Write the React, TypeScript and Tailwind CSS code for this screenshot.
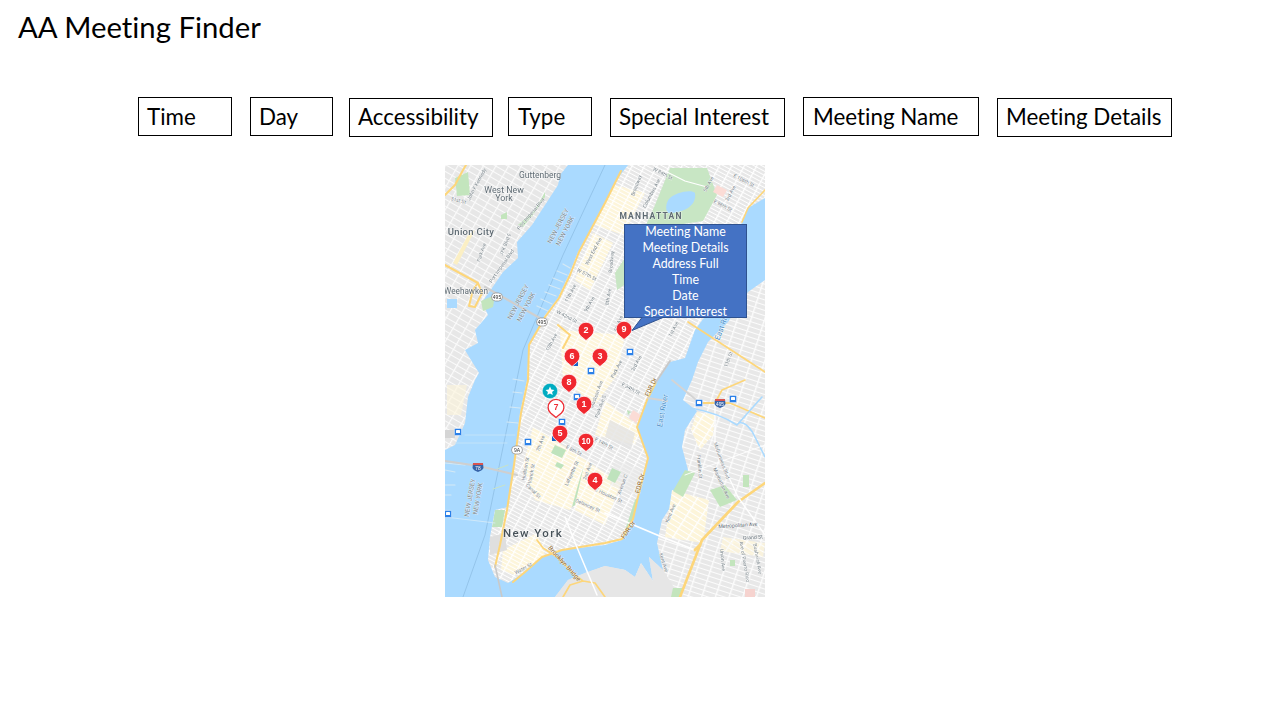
const font = { fontFamily: "Lato, 'Noto Sans', sans-serif" };

const filters: [string, string][] = [
  ["Time", "w-[94px] h-[39px] pl-2 pt-[2px]"],
  ["Day", "w-[83px] h-[39px] ml-[18px] pl-2 pt-[2px]"],
  ["Accessibility", "w-[144px] h-[39px] ml-[16px] mt-px pl-2"],
  ["Type", "w-[84px] h-[39px] ml-[15px] pl-[9px] pt-[2px]"],
  ["Special Interest", "w-[175px] h-[39px] ml-[18px] mt-px pl-2"],
  ["Meeting Name", "w-[176px] h-[39px] ml-[18px] pl-[9px] pt-[2px]"],
  ["Meeting Details", "w-[175px] h-[39px] ml-[18px] mt-px pl-2"],
];

const njLand =
  "M0 0H123L115 10L113 20L100 40L87 60L72 77L73 93L58 107L47 123L37 137L43 150L30 165L33 178L20 185L26 195L34 208L30 215L23 232L20 258L10 280L0 285Z";
const manhattan =
  "M183 0L170 17L160 37L147 63L133 87L125 107L113 133L100 150L84 180L82 215L75 248L67 315L63 342L50 345L45 372L43 395L50 412L63 418L80 407L97 392L117 385L160 380L177 375L188 355L193 332L203 293L192 262L202 235L213 215L225 197L240 193L250 165L283 120L297 57L303 43L320 33V0Z";
const brooklyn =
  "M320 115L303 127L283 157L263 177L253 197L247 215L238 235L252 246L240 265L237 282L243 305L232 332L217 355L212 378L218 405L204 392L208 416L196 398L190 412L180 405L160 401L140 408L123 415L110 432H320Z";

const pins: [string, number, number][] = [
  ["2", 141, 165],
  ["9", 179, 164],
  ["6", 127, 191],
  ["3", 155, 191],
  ["8", 124, 217],
  ["1", 139, 239],
  ["5", 115, 268],
  ["10", 141, 276],
  ["4", 150, 315],
];

const transit: [number, number][] = [
  [185, 187], [146, 206], [132, 232], [117, 257], [13, 267], [83, 277], [254, 238], [288, 234], [3, 349],
];

const c1 = "#5f6b73";
const c2 = "#7c878d";
const c3 = "#8a5f22";
const labels: [string, number, number, number, number, string][] = [
  ["NEW JERSEY", 115, 62, 6.5, -62, c2],
  ["NEW YORK", 122, 67, 6.5, -62, c2],
  ["NEW JERSEY", 75, 138, 6.5, -62, c2],
  ["NEW YORK", 83, 143, 6.5, -62, c2],
  ["NEW JERSEY", 27, 333, 6.5, -80, c2],
  ["NEW YORK", 35, 334, 6.5, -80, c2],
  ["East River", 220, 246, 7.5, -80, "#4a8fc8"],
  ["East River", 280, 160, 7.5, -70, "#4a8fc8"],
  ["FDR Dr", 197, 319, 6.5, -75, c3],
  ["FDR Dr", 185, 366, 6.5, -55, c3],
  ["FDR Dr", 208, 223, 6.5, -65, c3],
  ["Brooklyn Bridge", 118, 400, 6.5, 48, c3],
  ["51st St", 13, 37, 5, 15, c2],
  ["John F Kennedy", 33, 20, 5, -62, c2],
  ["Park Ave", 38, 88, 5, -72, c2],
  ["JFK Blvd E", 62, 80, 5, -68, c2],
  ["Port Imperial Blvd", 87, 50, 5, -50, c2],
  ["Port Imperial Blvd", 58, 102, 5, -55, c2],
  ["West End Ave", 150, 87, 5, -62, c2],
  ["W 57th St", 141, 111, 5, 28, c2],
  ["W 42nd St", 121, 153, 5, 28, c2],
  ["11th Ave", 127, 129, 5, -62, c2],
  ["9th Ave", 146, 140, 5, -62, c2],
  ["8th Ave", 165, 132, 5, -80, c2],
  ["10th Ave", 108, 178, 5, -62, c2],
  ["7th Ave", 97, 279, 5, -70, c2],
  ["E 8th St", 128, 287, 5, 28, c2],
  ["E 14th St", 158, 280, 5, 28, c2],
  ["Hudson St", 82, 304, 5, -80, c2],
  ["Varick St", 88, 309, 5, -80, c2],
  ["Canal St", 87, 327, 5, 45, c2],
  ["Lafayette St", 128, 309, 5, -65, c2],
  ["2nd Ave", 144, 307, 5, -70, c2],
  ["Delancey St", 142, 342, 5, 24, c2],
  ["E Houston St", 163, 332, 5, 24, c2],
  ["Avenue C", 179, 320, 5, -70, c2],
  ["Water St", 79, 405, 5, -28, c2],
  ["Park Ave S", 157, 242, 5, -70, c2],
  ["Madison Ave", 153, 230, 5, -70, c2],
  ["E 34th St", 185, 225, 5, 28, c2],
  ["Kent Ave", 227, 349, 5, -68, c2],
  ["Kent Ave", 217, 398, 5, 72, c2],
  ["Franklin St", 253, 302, 5, 85, c2],
  ["McGuinness Blvd", 275, 296, 5, 70, c2],
  ["Manhattan Ave", 275, 319, 5, 65, c2],
  ["Metropolitan Ave", 293, 362, 5.2, -4, c1],
  ["Grand St", 308, 374, 5.2, -4, c1],
  ["Union Ave", 276, 395, 5, 85, c2],
  ["Ave of Puerto Rico", 298, 397, 5, 80, c2],
  ["Bushwick Ave", 311, 394, 5, 80, c2],
  ["E 96th St", 277, 42, 5, 28, c2],
  ["5th Ave", 265, 20, 5, -62, c2],
  ["3rd Ave", 287, 29, 5, -62, c2],
  ["E 106th St", 298, 17, 5, 28, c2],
  ["Columbus Ave", 208, 29, 5, -62, c2],
  ["Broadway", 193, 21, 5, -70, c2],
  ["W 84th St", 217, 10, 5, 28, c2],
  ["Broadway", 168, 97, 5, -85, c2],
  ["5th Ave", 175, 159, 5, -70, c2],
  ["1st Ave", 230, 165, 5, -62, c2],
  ["3rd Ave", 193, 199, 5, -62, c2],
  ["Park Ave", 173, 205, 5, -62, c2],
  ["11th St", 285, 195, 5, -70, c2],
];

const cream: string[] = [
  "M115 165L180 170L172 210L150 240L118 215Z",
  "M88 262L125 285L148 300L125 345L90 335L78 300Z",
  "M132 290L176 318L160 360L130 345Z",
  "M58 385L92 368L100 390L70 410L56 405Z",
  "M170 20L200 28L178 70L150 60Z",
  "M148 68L168 78L145 125L130 115Z",
  "M160 236L195 262L190 280L150 270Z",
];
const greens: string[] = [
  "M106 235L113 239L110 244L103 240Z",
  "M110 280L121 285L117 293L106 288Z",
  "M112 297L119 300L116 304L110 301Z",
  "M167 303L176 307L170 318L162 314Z",
  "M139 300L130 340L127 342L133 320Z",
  "M185 350L190 335L193 332L187 360L178 372Z",
  "M50 345L60 345L57 362L47 362Z",
  "M58 270L68 271L66 288L58 288Z",
  "M182 245L186 247L183 250Z",
];

function Pin({ n, x, y }: { n: string; x: number; y: number }) {
  return (
    <g transform={`translate(${x} ${y})`}>
      <path d="M0 10.5L-5.4 5.9A7.9 7.9 0 1 1 5.4 5.9Z" fill="#f0282f" stroke="#fff" strokeOpacity="0.75" strokeWidth="1" />
      <text
        y="3.1"
        textAnchor="middle"
        fontSize={n.length > 1 ? 8.2 : 9}
        fontWeight="700"
        fill="#fff"
        fontFamily="'Liberation Sans', sans-serif"
      >
        {n}
      </text>
    </g>
  );
}

function Road({ d, w = 2, c = "#fdd67a" }: { d: string; w?: number; c?: string }) {
  return <path d={d} stroke={c} strokeWidth={w} fill="none" strokeLinejoin="round" strokeLinecap="round" />;
}

function MapArt() {
  return (
    <svg viewBox="0 0 320 432" className="block w-[320px] h-[432px]">
      <defs>
        <pattern id="mGrid" width="3.6" height="11" patternUnits="userSpaceOnUse" patternTransform="rotate(-62)">
          <rect width="3.6" height="11" fill="#e7e7e7" />
          <rect width="3.6" height="1.3" fill="#ffffff" />
          <rect width="1" height="11" fill="#ffffff" />
        </pattern>
        <pattern id="mCream" width="3.6" height="11" patternUnits="userSpaceOnUse" patternTransform="rotate(-62)">
          <rect width="3.6" height="11" fill="#fdf5da" />
          <rect width="3.6" height="1.3" fill="#ffffff" />
          <rect width="1" height="11" fill="#ffffff" />
        </pattern>
        <pattern id="nj" width="6" height="11" patternUnits="userSpaceOnUse" patternTransform="rotate(-60)">
          <rect width="6" height="11" fill="#e7e7e7" />
          <rect width="6" height="1.2" fill="#fbfbfb" />
          <rect width="1" height="11" fill="#fbfbfb" />
        </pattern>
        <pattern id="bk" width="5" height="13" patternUnits="userSpaceOnUse" patternTransform="rotate(-72)">
          <rect width="5" height="13" fill="#e8e8e8" />
          <rect width="5" height="1.4" fill="#fcfcfc" />
          <rect width="1" height="13" fill="#fcfcfc" />
        </pattern>
        <pattern id="bkCream" width="5" height="13" patternUnits="userSpaceOnUse" patternTransform="rotate(-58)">
          <rect width="5" height="13" fill="#fdf5da" />
          <rect width="5" height="1.4" fill="#ffffff" />
          <rect width="1" height="13" fill="#ffffff" />
        </pattern>
        <clipPath id="mclip">
          <path d={manhattan} />
        </clipPath>
      </defs>
      <g style={{ filter: "blur(0.5px)" }}>
        <rect width="320" height="432" fill="#aadaff" />
        <path d={njLand} fill="url(#nj)" />
        <path d={brooklyn} fill="url(#bk)" />
        <path d="M160 401L140 408L123 415L110 432H235L218 405L204 392L208 416L196 398L190 412L180 405Z" fill="#e6e6e6" />
        <path d={manhattan} fill="url(#mGrid)" />
        <g clipPath="url(#mclip)">
          {cream.map((d) => (
            <path key={d} d={d} fill="url(#mCream)" />
          ))}
          <path d="M165 255L190 268L186 285L160 272Z" fill="#e4e4e4" opacity="0.8" />
          <path d="M170 295L198 305L192 330L165 320Z" fill="#e9e9e9" opacity="0.55" />
          <path d="M45 372L60 368L62 385L45 390Z" fill="#dfdfdf" />
          <path d="M188 245L196 250L191 258L184 253Z" fill="#fbdcd6" />
          {greens.map((d) => (
            <path key={d} d={d} fill="#bfe3bd" />
          ))}
          <path d="M225 3L262 3L272 30L258 56L232 60L208 100L172 125L170 108L200 62L210 40Z" fill="#c8e6c4" />
          <path d="M224 34C230 27 247 24 250 28C252 40 240 48 223 48C220 44 221 38 224 34Z" fill="#aadaff" />
          <path d="M218 5L240 16L262 22" stroke="#fff" strokeWidth="1.2" fill="none" />
          <path d="M272 20L282 25L278 32L268 27Z" fill="#fbdcd6" />
        </g>
        <path d="M227 325L264 335L258 378L220 372Z" fill="url(#bkCream)" />
        <path d="M252 247L270 250L268 270L255 285L246 265Z" fill="url(#bkCream)" />
        <path d="M278 372L320 378L318 392L275 386Z" fill="url(#bkCream)" opacity="0.8" />
        <path d="M240 305L250 308L238 332L228 326Z" fill="#c3e5bd" />
        <path d="M265 325L280 320L292 335L275 342Z" fill="#c3e5bd" />
        <path d="M298 310L304 310L304 322L298 322Z" fill="#c3e5bd" />
        <path d="M228 423L238 423L236 432H226Z" fill="#c3e5bd" />
        <path d="M285 395L290 395L290 401L285 401Z" fill="#c3e5bd" />
        <path d="M300 424L310 424L310 432H300Z" fill="#f6d3cf" />
        <path d="M10 13L23 7L25 30L12 31Z" fill="#c3e5bd" />
        <path d="M73 60L90 45L100 27L100 32L88 50L78 62Z" fill="#c3e5bd" />
        <path d="M56 50L62 47L62 54L56 54Z" fill="#c3e5bd" />
        <path d="M36 136L50 130L48 142L38 146Z" fill="#c3e5bd" />
        <rect x="2" y="134" width="10" height="9" fill="#aadaff" />
        <path d="M30 65L23 70L8 98L12 100Z" fill="#fbefc4" />
        <path d="M2 220H22L16 250H2Z" fill="#fdf5da" opacity="0.6" />
        <path d="M0 265H10V273H0Z" fill="#d5d5d5" />
        <Road d="M160 0L118 90L78 185L40 370L18 432" w={0.6} c="#84b6dc" />
        <Road d="M125 103L118 99M122 110L112 106M118 117L108 113M115 124L104 120M111 131L100 127M107 139L96 134M103 146L92 141" w={1.3} c="#d5e9f5" />
        <Road d="M79 216L68 214M77 228L68 227M75 243L65 242M73 258L62 257" w={1.2} c="#d5e9f5" />
        <Road d="M63 300L52 304M60 320L48 324" w={1} c="#c9e3c6" />
        <Road d="M0 298L20 300M0 305L10 307M0 330H6M0 320H10" w={1.1} c="#d5e9f5" />
        <Road d="M0 30L10 20L18 5L21 0" />
        <Road d="M0 100L33 118L37 128L30 142L24 141L28 125L33 118" />
        <Road d="M40 122L100 156" w={2.2} c="#cfcfcf" />
        <Road d="M0 296L34 301L72 310" w={2.2} c="#cfcfcf" />
        <Road d="M0 352L50 358" w={0.8} c="#d9ecf8" />
        <Road d="M20 270H70M10 278H62" w={0.7} c="#cfe6f7" />
        <Road d="M176 6L160 38L134 87L125 110L114 133L100 152L84 180L83 215L76 248L69 300L62 345L55 380L50 402" w={2} />
        <Road d="M50 400L57 432" w={1.6} c="#c9c9c9" />
        <Road d="M68 417L80 407L97 392L117 385L160 378L177 374L188 354L193 332L203 293L192 262L202 235L211 217" w={2} />
        <Road d="M211 217L225 196" w={2} c="#c9c9c9" />
        <Road d="M113 160L125 170L118 183" w={2} />
        <Road d="M92 375L98 383L112 392L130 410L138 416L150 418L160 432M138 416L125 420L118 432" w={1.7} />
        <Road d="M243 157L320 207" w={1.7} />
        <Road d="M297 57L303 43L320 25" w={1.6} />
        <Road d="M203 233L222 236M227 215L255 238" w={1.8} c="#d4d4d4" />
        <Road d="M255 238L270 238L285 238L320 253" w={1.8} />
        <Road d="M270 238L277 225L300 215" w={1.6} />
        <Road d="M235 432L257 375L293 337L320 318" w={2.6} />
        <Road d="M160 348L217 372L250 385" w={1.8} c="#ffffff" />
        <Road d="M250 385L255 380" w={3} />
        <Road d="M120 352L131 380L152 430" w={1.5} c="#ffffff" />
        <Road d="M270 238L270 282L293 332L320 370" w={1.3} c="#ffffff" />
        <Road d="M246 243C262 246 280 252 292 260L317 232M294 258C300 256 307 265 310 272L320 292" w={1.6} c="#aadaff" />
        <Road d="M240 310L320 280" w={0.9} c="#ffffff" />
        <path d="M240 142L246 132L250 128L246 140L238 152Z" fill="#c3e5bd" />
        <g fontFamily="Roboto, sans-serif">
          {labels.map(([t, x, y, s, r, c], i) => (
            <text
              key={i}
              x={x}
              y={y}
              fontSize={s}
              fill={c}
              textAnchor="middle"
              transform={r ? `rotate(${r} ${x} ${y})` : undefined}
              stroke="#ffffff"
              strokeOpacity="0.65"
              strokeWidth="0.8"
              paintOrder="stroke"
            >
              {t}
            </text>
          ))}
          <text x="95" y="13" fontSize="8.5" fill={c1} textAnchor="middle" stroke="#fff" strokeOpacity="0.6" strokeWidth="1" paintOrder="stroke">Guttenberg</text>
          <text x="59" y="28" fontSize="8.8" fill={c1} textAnchor="middle" stroke="#fff" strokeOpacity="0.6" strokeWidth="1" paintOrder="stroke">West New</text>
          <text x="59" y="36" fontSize="8.8" fill={c1} textAnchor="middle" stroke="#fff" strokeOpacity="0.6" strokeWidth="1" paintOrder="stroke">York</text>
          <text x="26" y="70" fontSize="9.5" fontWeight="500" letterSpacing="0.3" fill={c1} textAnchor="middle" stroke="#fff" strokeOpacity="0.6" strokeWidth="1" paintOrder="stroke">Union City</text>
          <text x="21" y="129" fontSize="8.2" fill={c1} textAnchor="middle" stroke="#fff" strokeOpacity="0.6" strokeWidth="1" paintOrder="stroke">Weehawken</text>
          <text x="206" y="54" fontSize="8.5" fontWeight="700" letterSpacing="1.2" fill={c1} textAnchor="middle" stroke="#fff" strokeOpacity="0.6" strokeWidth="1" paintOrder="stroke">
            MANHATTAN
          </text>
          <text x="88" y="372" fontSize="11.5" fontWeight="500" letterSpacing="1.4" fill="#475259" textAnchor="middle" stroke="#fff" strokeOpacity="0.7" strokeWidth="1" paintOrder="stroke">
            New York
          </text>
        </g>
        {[
          ["495", 52, 132],
          ["495", 97, 157],
          ["9A", 72, 285],
        ].map(([t, x, y]) => (
          <g key={`${t}${x}`}>
            <rect x={Number(x) - 5.5} y={Number(y) - 4} width="11" height="8" rx="4" fill="#fff" stroke="#777" strokeWidth="0.6" />
            <text x={Number(x)} y={Number(y) + 2} fontSize="5" textAnchor="middle" fill="#333" fontFamily="'Liberation Sans', sans-serif">
              {t}
            </text>
          </g>
        ))}
        {[
          ["78", 33, 302],
          ["495", 275, 238],
        ].map(([t, x, y]) => (
          <g key={String(t)}>
            <path
              d={`M${Number(x) - 5} ${Number(y) - 4}H${Number(x) + 5}L${Number(x) + 5.5} ${Number(y) + 1}C${Number(x) + 5} ${Number(y) + 3} ${Number(x) + 2} ${Number(y) + 4} ${x} ${Number(y) + 5}C${Number(x) - 2} ${Number(y) + 4} ${Number(x) - 5} ${Number(y) + 3} ${Number(x) - 5.5} ${Number(y) + 1}Z`}
              fill="#3563a8"
            />
            <rect x={Number(x) - 5} y={Number(y) - 4} width="10" height="2" fill="#d9534f" />
            <text x={Number(x)} y={Number(y) + 2.5} fontSize="4.8" textAnchor="middle" fill="#fff" fontFamily="'Liberation Sans', sans-serif">
              {t}
            </text>
          </g>
        ))}
        <rect x="127" y="196" width="6" height="5" fill="#1a63c5" />
        <rect x="107" y="271" width="5" height="5" fill="#1a63c5" />
        {transit.map(([x, y]) => (
          <g key={`${x}-${y}`}>
            <rect x={x - 3.6} y={y - 3.6} width="7.2" height="7.2" rx="1.2" fill="#2b80e8" stroke="#fff" strokeWidth="0.5" />
            <rect x={x - 2} y={y - 2} width="4" height="3" rx="0.6" fill="#fff" />
          </g>
        ))}
      </g>
      <g style={{ filter: "blur(0.25px)" }}>
        <g transform="translate(105 226)">
          <circle r="7.6" fill="#00acc1" stroke="#fff" strokeOpacity="0.5" strokeWidth="0.6" />
          <path d="M0 -4.4L1.3 -1.4L4.4 -1.1L2.1 1L2.8 4.1L0 2.6L-2.8 4.1L-2.1 1L-4.4 -1.1L-1.3 -1.4Z" fill="#fff" />
        </g>
        <g transform="translate(111 242)">
          <path d="M0 10.5L-5.4 6A7.9 7.9 0 1 1 5.4 6Z" fill="#fff" stroke="#ee2b33" strokeWidth="1.3" />
          <text y="3" textAnchor="middle" fontSize="8.5" fontWeight="700" fill="#ee2b33" fontFamily="'Liberation Sans', sans-serif">
            7
          </text>
        </g>
        {pins.map(([n, x, y]) => (
          <Pin key={n} n={n} x={x} y={y} />
        ))}
      </g>
    </svg>
  );
}

export default function App() {
  return (
    <div className="w-[1280px] h-[720px] bg-white text-black overflow-hidden [font-variant-ligatures:none]" style={font}>
      <h1 className="pl-[18px] pt-[8px] h-[97px] text-[29.3px] leading-[38px] font-normal">AA Meeting Finder</h1>
      <div className="flex items-start pl-[138px] h-[68px]">
        {filters.map(([t, c]) => (
          <div key={t} className={`${c} border border-black flex items-center text-[22.4px] leading-none whitespace-nowrap`}>
            {t}
          </div>
        ))}
      </div>
      <div className="relative ml-[445px] w-[320px] h-[432px]">
        <MapArt />
        <div className="absolute left-[179px] top-[59px] w-[123px] h-[94px] bg-[#4472c4] border border-[#2f528f] text-white text-center text-[12.4px] leading-[16px] overflow-hidden">
          <div className="-mt-px">Meeting Name</div>
          <div>Meeting Details</div>
          <div>Address Full</div>
          <div>Time</div>
          <div>Date</div>
          <div>Special Interest</div>
        </div>
        <svg viewBox="0 0 50 16" className="absolute left-[180px] top-[152px] w-[50px] h-[16px]">
          <path d="M17 0.5L7 13.5L38 0.5" fill="#4472c4" stroke="#2f528f" strokeWidth="1" />
          <path d="M16 0L38 0L30 0Z" fill="#4472c4" />
        </svg>
      </div>
    </div>
  );
}
